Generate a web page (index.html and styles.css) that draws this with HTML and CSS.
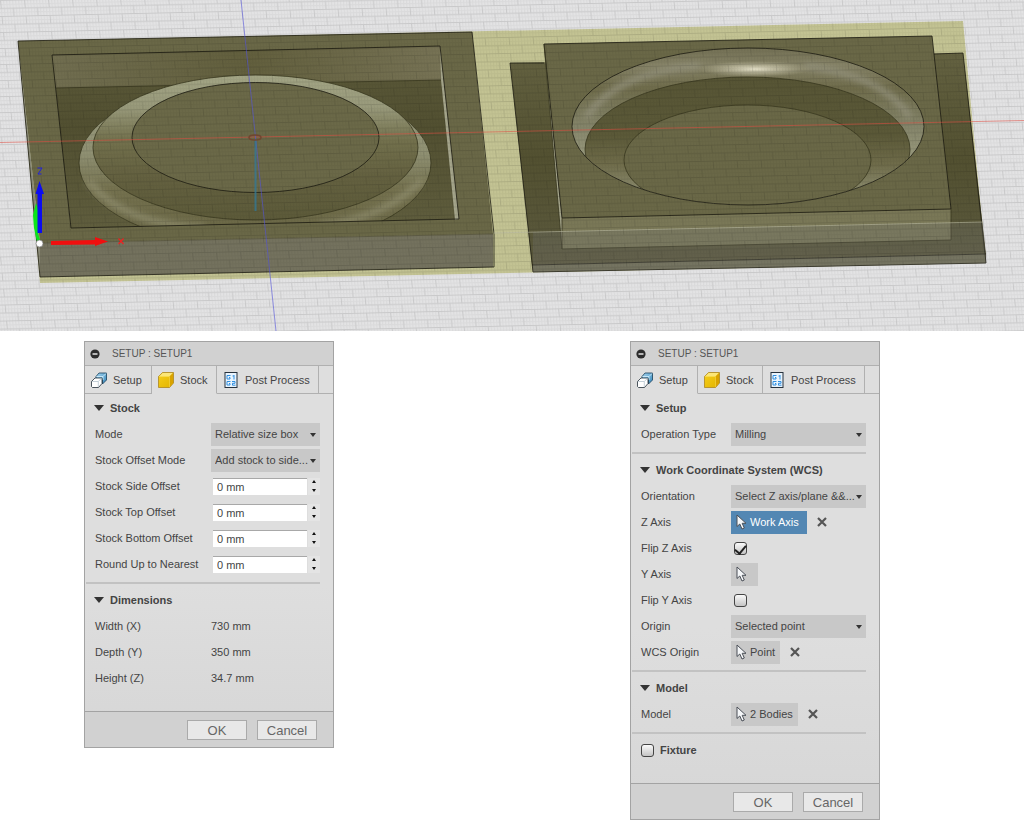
FILE: index.html
```
<!DOCTYPE html>
<html lang="en">
<head>
  <meta charset="UTF-8" />
  <meta name="viewport" content="width=device-width, initial-scale=1.0"/>
  <title>Setup : Setup1</title>
  <link rel="stylesheet" href="styles.css">
</head>
<body>
  <!-- shared icons -->
  <svg class="sprite" aria-hidden="true">
    <defs>
      <linearGradient id="blueTop" x1="0" y1="0" x2="1" y2="1">
        <stop offset="0" stop-color="#a9d8f2"/>
        <stop offset="1" stop-color="#2f83b8"/>
      </linearGradient>
      <linearGradient id="goldSide" x1="0" y1="0" x2="1" y2="1">
        <stop offset="0" stop-color="#f6cf1c"/>
        <stop offset="1" stop-color="#e2b400"/>
      </linearGradient>
    </defs>
    <symbol id="icon-setup" viewBox="0 0 16 16">
      <path d="M5 4.500L8 1H15.500V8L11.500 12V7H5Z" fill="url(#blueTop)" stroke="#173d58" stroke-width=".8"/>
      <path d="M5.500 4.500H12L15 1.500M12 4.500V8" fill="none" stroke="#d9f1fc" stroke-width=".8"/>
      <path d="M.5 9.500L4 6H11V11.500L7.500 15.500H1.500L.5 14.500Z" fill="#fff" stroke="#222e38" stroke-width=".8"/>
      <path d="M1.200 9.500H7.300V15M7.300 9.500L10.500 6.300" fill="none" stroke="#b5c4ce" stroke-width=".8"/>
    </symbol>
    <symbol id="icon-stock" viewBox="0 0 16 16">
      <path d="M.5 4.500L4.500 .5H15.500V11L11.500 15.500H.5Z" fill="url(#goldSide)" stroke="#a57d12" stroke-width=".7"/>
      <path d="M1 4.500L4.700 1H15L11.500 4.500Z" fill="#fbe678"/>
      <path d="M11.500 4.500L15 1V11L11.500 15Z" fill="#d9a300"/>
      <path d="M1 4.500H11.500V15" fill="none" stroke="#f8dc50" stroke-width=".6"/>
    </symbol>
    <symbol id="icon-post" viewBox="0 0 13 16">
      <rect x=".5" y=".5" width="12" height="15" fill="#e9f4fd" stroke="#26323e"/>
      <path d="M6 3.500H2.500V7H5.500V5.500H4.500M8 4H9.500M9.500 3V7.500M6 9.500H2.500V13H5.500V11.500H4.500M7.500 9.500H10.500V11.300H8V13.200H11" fill="none" stroke="#2f8ee0"/>
    </symbol>
    <symbol id="icon-cursor" viewBox="0 0 11 16">
      <path d="M1 1V12.500L3.800 10L6 15L8.300 14L6.200 9.300H10Z" fill="#f4f6f8" stroke="#4a4f57"/>
    </symbol>
    <symbol id="icon-clear" viewBox="0 0 10 10">
      <path d="M1 1L9 9M9 1L1 9" fill="none" stroke="#555" stroke-width="2.200"/>
    </symbol>
    <symbol id="icon-collapse" viewBox="0 0 10 10">
      <circle cx="5" cy="5" r="4.600" fill="#2c2c2c"/>
      <path d="M2.500 5H7.500" stroke="#e4e4e4" stroke-width="1.500"/>
    </symbol>
  </svg>

  <svg class="scene" viewBox="0 0 1024 331" role="img" aria-label="Stock and two machined bodies">
    <defs>
      <pattern id="gridMinor" width="3" height="4" patternUnits="userSpaceOnUse" patternTransform="matrix(1 -.022 .094 1 0 0)">
        <path d="M0 .5H3M.5 0V4" stroke="#000" stroke-opacity=".04" fill="none"/>
      </pattern>
      <pattern id="gridMajor" width="24" height="16" patternUnits="userSpaceOnUse" patternTransform="matrix(1 -.022 .094 1 0 0)">
        <path d="M0 .5H24M0 8.500H24M.5 0V8M12.500 8V16" stroke="#000" stroke-opacity=".08" fill="none"/>
      </pattern>
      <linearGradient id="floor" x1="0" y1="0" x2="0" y2="1">
        <stop offset="0" stop-color="#5c5a3a"/>
        <stop offset=".45" stop-color="#525031"/>
        <stop offset="1" stop-color="#605e3e"/>
      </linearGradient>
      <linearGradient id="backWall" x1="0" y1="0" x2="1" y2="0">
        <stop offset="0" stop-color="#716e50"/>
        <stop offset=".5" stop-color="#625f3d"/>
        <stop offset="1" stop-color="#777355"/>
      </linearGradient>
      <linearGradient id="cone" x1="0" y1="0" x2="0" y2="1">
        <stop offset="0" stop-color="#a3a585"/>
        <stop offset=".22" stop-color="#999a7b"/>
        <stop offset=".45" stop-color="#73714d"/>
        <stop offset=".7" stop-color="#646140"/>
        <stop offset="1" stop-color="#5c5a39"/>
      </linearGradient>
      <linearGradient id="skirt" x1="0" y1="0" x2="0" y2="1">
        <stop offset="0" stop-color="#a0a183"/>
        <stop offset=".45" stop-color="#8f9072"/>
        <stop offset=".65" stop-color="#75724f"/>
        <stop offset="1" stop-color="#666342"/>
      </linearGradient>
      <linearGradient id="bowlWall" x1="0" y1="0" x2="0" y2="1">
        <stop offset="0" stop-color="#716e52"/>
        <stop offset=".12" stop-color="#858266"/>
        <stop offset=".26" stop-color="#6f6c4b"/>
        <stop offset=".5" stop-color="#85856a"/>
        <stop offset=".75" stop-color="#a0a184"/>
      </linearGradient>
      <linearGradient id="bowlCone" x1="0" y1="0" x2="0" y2="1">
        <stop offset="0" stop-color="#575535"/>
        <stop offset=".4" stop-color="#5b5938"/>
        <stop offset=".6" stop-color="#6f6c4a"/>
        <stop offset=".8" stop-color="#8d8d70"/>
      </linearGradient>
      <linearGradient id="baseTop" x1="0" y1="0" x2="0" y2="1">
        <stop offset="0" stop-color="#646241"/>
        <stop offset=".5" stop-color="#535131"/>
        <stop offset="1" stop-color="#5c5a3e"/>
      </linearGradient>
      <radialGradient id="glow">
        <stop offset="0" stop-color="#e6e2ca"/>
        <stop offset=".5" stop-color="#c9c5aa" stop-opacity=".6"/>
        <stop offset="1" stop-color="#b5b194" stop-opacity="0"/>
      </radialGradient>
      <filter id="soften" x="-10%" y="-50%" width="120%" height="200%"><feGaussianBlur stdDeviation="3"/></filter>
      <clipPath id="pocketClip"><path d="M52 30H441L459 219L71 228Z"/></clipPath>
      <clipPath id="bowlClip"><ellipse cx="748" cy="126.500" rx="176" ry="78.500"/></clipPath>
    </defs>

    <rect width="1024" height="331" fill="#e3e3e4"/>
    <path d="M18 41L963 21L986 263L40 283Z" fill="#c3c393"/>

    <!-- left body -->
    <path d="M18 41L472 32L493 234L40 243Z" fill="#6a6847"/>
    <path d="M40 243L493 234V267L40 277Z" fill="#74725e"/>
    <path d="M18 41L40 243V277Z" fill="#8d8d7a"/>
    <path d="M52 55L440 46L459 219L71 228Z" fill="url(#floor)"/>
    <path d="M52 55L440 46L442 80L56 88Z" fill="url(#backWall)"/>
    <path d="M56 88L442 80" class="edge soft" fill="none"/>
    <path d="M440 46L459 219L455 220L441 80Z" fill="#a5a58b"/>
    <g clip-path="url(#pocketClip)">
      <ellipse cx="255" cy="163" rx="176" ry="84" fill="url(#skirt)" class="edge soft"/>
      <path d="M88 180Q120 224 205 228M422 180Q385 218 320 226" fill="none" stroke="#8f8d6d" stroke-width="6" filter="url(#soften)"/>
      <ellipse cx="255.500" cy="147.500" rx="162.500" ry="72.500" fill="url(#cone)" class="edge soft"/>
    </g>
    <ellipse cx="255.500" cy="137.500" rx="123.500" ry="55" fill="#6b6948" class="edge"/>
    <path d="M52 55L440 46L459 219L71 228Z" class="edge" fill="none"/>
    <path d="M472 32L18 41L40 277L494 267V234Z" class="edge" fill="none"/>
    <path d="M40 243L493 234" class="edge faint" fill="none"/>

    <!-- right body -->
    <path d="M510 63L963 53L986 254L532 265Z" fill="url(#baseTop)"/>
    <path d="M532 265L986 254V263L533 272Z" fill="#75735a"/>
    <path d="M544 44L562 218V249Z" fill="#a5a58b"/>
    <path d="M544 44L932 36L951 209L562 218Z" fill="#6a6847"/>
    <path d="M562 218L951 209V240L562 249Z" fill="#7a7857"/>
    <g clip-path="url(#bowlClip)">
      <rect x="570" y="46" width="356" height="162" fill="url(#bowlWall)"/>
      <path d="M586 118Q615 72 700 66M910 118Q885 76 805 66" fill="none" stroke="#93917a" stroke-width="6" filter="url(#soften)"/>
      <ellipse cx="755" cy="69" rx="58" ry="8" fill="url(#glow)"/>
      <ellipse cx="747.500" cy="149.500" rx="162.500" ry="72.500" fill="url(#bowlCone)" class="edge soft"/>
      <ellipse cx="747.500" cy="160" rx="123.500" ry="55" fill="#6a6847" class="edge soft"/>
    </g>
    <ellipse cx="748" cy="126.500" rx="176" ry="78.500" class="edge" fill="none"/>
    <path d="M544 44L932 36L951 209L562 218Z" class="edge" fill="none"/>
    <path d="M544 44L562 249L951 240V209M562 218V249" class="edge soft" fill="none"/>
    <path d="M544 63H510L533 272L986 263L963 53L934 54M532 265L986 254" class="edge" fill="none"/>

    <!-- front of the stock -->
    <path d="M533 232L983 222L986 263L533 272Z" fill="#777" fill-opacity=".25"/>
    <path d="M494 233L983 222" stroke="#b9b9a0" stroke-opacity=".6"/>

    <rect width="1024" height="331" fill="url(#gridMinor)"/>
    <rect width="1024" height="331" fill="url(#gridMajor)"/>

    <!-- axes -->
    <path d="M0 142.500L1024 120.500" stroke="#e04a40" stroke-opacity=".55"/>
    <path d="M241 0L276 331" stroke="#5454dc" stroke-opacity=".6"/>
    <path d="M255.500 139V211" stroke="#317a98" stroke-width="2" stroke-opacity=".75"/>
    <ellipse cx="255" cy="137.500" rx="6" ry="2.500" fill="none" stroke="#70452f" stroke-width="1.500"/>

    <!-- triad -->
    <path d="M33 215L36 203L38 210V234L41 242H37L34 228Z" fill="#0be51b"/>
    <path d="M37.500 233V194H35.500L39.500 181L44 194H42V233Z" fill="#0c0cf2"/>
    <path d="M37.500 168H42L38 174H41.500" fill="none" stroke="#2222d8"/>
    <path d="M51 241L95 240V237L108 241.500L95 246V244.500L51 245Z" fill="#f00f0f"/>
    <path d="M118.500 238.500L123.500 244M123.500 238.500L118.500 244" stroke="#e22" stroke-width="1.200"/>
    <circle cx="39.500" cy="243.500" r="3.500" fill="#fff" stroke="#777" stroke-width=".7"/>
  </svg>

  <main class="dialogs">
    <form class="dialog">
      <header class="title-bar">
        <button type="button" class="collapse" aria-label="Collapse"><svg><use href="#icon-collapse"/></svg></button>
        <span>SETUP : SETUP1</span>
      </header>
      <nav class="tabs">
        <button type="button" class="tab tab-setup"><svg><use href="#icon-setup"/></svg>Setup</button>
        <button type="button" class="tab tab-stock active"><svg><use href="#icon-stock"/></svg>Stock</button>
        <button type="button" class="tab tab-post"><svg><use href="#icon-post"/></svg>Post Process</button>
      </nav>
      <div class="content stock-content">
        <section>
          <h2>Stock</h2>
          <div class="row">
            <label for="mode">Mode</label>
            <div class="select"><select id="mode"><option>Relative size box</option></select></div>
          </div>
          <div class="row">
            <label for="offsetMode">Stock Offset Mode</label>
            <div class="select"><select id="offsetMode"><option>Add stock to side...</option></select></div>
          </div>
          <div class="row">
            <label for="sideOffset">Stock Side Offset</label>
            <div class="number"><input type="text" id="sideOffset" value="0 mm"><span class="spin"><button type="button" class="up" aria-label="Increase"></button><button type="button" class="down" aria-label="Decrease"></button></span></div>
          </div>
          <div class="row">
            <label for="topOffset">Stock Top Offset</label>
            <div class="number"><input type="text" id="topOffset" value="0 mm"><span class="spin"><button type="button" class="up" aria-label="Increase"></button><button type="button" class="down" aria-label="Decrease"></button></span></div>
          </div>
          <div class="row">
            <label for="bottomOffset">Stock Bottom Offset</label>
            <div class="number"><input type="text" id="bottomOffset" value="0 mm"><span class="spin"><button type="button" class="up" aria-label="Increase"></button><button type="button" class="down" aria-label="Decrease"></button></span></div>
          </div>
          <div class="row">
            <label for="roundUp">Round Up to Nearest</label>
            <div class="number"><input type="text" id="roundUp" value="0 mm"><span class="spin"><button type="button" class="up" aria-label="Increase"></button><button type="button" class="down" aria-label="Decrease"></button></span></div>
          </div>
        </section>
        <section>
          <h2>Dimensions</h2>
          <div class="row"><span>Width (X)</span><span>730 mm</span></div>
          <div class="row"><span>Depth (Y)</span><span>350 mm</span></div>
          <div class="row"><span>Height (Z)</span><span>34.7 mm</span></div>
        </section>
      </div>
      <footer class="actions">
        <button type="button">OK</button>
        <button type="button">Cancel</button>
      </footer>
    </form>

    <form class="dialog">
      <header class="title-bar">
        <button type="button" class="collapse" aria-label="Collapse"><svg><use href="#icon-collapse"/></svg></button>
        <span>SETUP : SETUP1</span>
      </header>
      <nav class="tabs">
        <button type="button" class="tab tab-setup active"><svg><use href="#icon-setup"/></svg>Setup</button>
        <button type="button" class="tab tab-stock"><svg><use href="#icon-stock"/></svg>Stock</button>
        <button type="button" class="tab tab-post"><svg><use href="#icon-post"/></svg>Post Process</button>
      </nav>
      <div class="content setup-content">
        <section>
          <h2>Setup</h2>
          <div class="row">
            <label for="operation">Operation Type</label>
            <div class="select"><select id="operation"><option>Milling</option></select></div>
          </div>
        </section>
        <section>
          <h2>Work Coordinate System (WCS)</h2>
          <div class="row">
            <label for="orientation">Orientation</label>
            <div class="select"><select id="orientation"><option>Select Z axis/plane &amp;&amp;...</option></select></div>
          </div>
          <div class="row">
            <label for="zAxis">Z Axis</label>
            <div class="picker">
              <button type="button" id="zAxis" class="pick selected"><svg><use href="#icon-cursor"/></svg>Work Axis</button>
              <button type="button" class="clear" aria-label="Clear Z axis"><svg><use href="#icon-clear"/></svg></button>
            </div>
          </div>
          <div class="row">
            <label for="flipZ">Flip Z Axis</label>
            <input type="checkbox" id="flipZ" checked>
          </div>
          <div class="row">
            <label for="yAxis">Y Axis</label>
            <div class="picker">
              <button type="button" id="yAxis" class="pick" aria-label="Pick Y axis"><svg><use href="#icon-cursor"/></svg></button>
            </div>
          </div>
          <div class="row">
            <label for="flipY">Flip Y Axis</label>
            <input type="checkbox" id="flipY">
          </div>
          <div class="row">
            <label for="origin">Origin</label>
            <div class="select"><select id="origin"><option>Selected point</option></select></div>
          </div>
          <div class="row">
            <label for="wcsOrigin">WCS Origin</label>
            <div class="picker">
              <button type="button" id="wcsOrigin" class="pick"><svg><use href="#icon-cursor"/></svg>Point</button>
              <button type="button" class="clear" aria-label="Clear origin"><svg><use href="#icon-clear"/></svg></button>
            </div>
          </div>
        </section>
        <section>
          <h2>Model</h2>
          <div class="row">
            <label for="model">Model</label>
            <div class="picker">
              <button type="button" id="model" class="pick"><svg><use href="#icon-cursor"/></svg>2 Bodies</button>
              <button type="button" class="clear" aria-label="Clear model"><svg><use href="#icon-clear"/></svg></button>
            </div>
          </div>
        </section>
        <section>
          <div class="fixture">
            <input type="checkbox" id="fixture">
            <label for="fixture">Fixture</label>
          </div>
        </section>
      </div>
      <footer class="actions">
        <button type="button">OK</button>
        <button type="button">Cancel</button>
      </footer>
    </form>
  </main>
</body>
</html>
```
FILE: styles.css
```
* {
  box-sizing: border-box;
}
body {
  margin: 0;
  background-color: #fff;
  font-family: "Liberation Sans", Arial, sans-serif;
  font-size: 11px;
  color: #444;
}
button,
input,
select {
  margin: 0;
  padding: 0;
  border: none;
  font: inherit;
  color: inherit;
}
button {
  background: none;
  cursor: pointer;
}
.sprite {
  position: absolute;
  width: 0;
  height: 0;
}
.scene {
  display: block;
  width: 100%;
}
.edge {
  stroke: #1d1c12;
  stroke-width: .8;
}
.edge.soft {
  stroke: #3a3820;
}
.edge.faint {
  stroke: #55533d;
}
.dialogs {
  display: flex;
  justify-content: space-between;
  align-items: flex-start;
  padding: 10px 144px 0 84px;
}
.dialog {
  width: 250px;
  border: 1px solid #a3a3a3;
  background: linear-gradient(#dedede 60%, #d6d6d6);
}
.title-bar {
  display: flex;
  align-items: center;
  gap: 12px;
  height: 24px;
  padding-left: 5px;
  border-bottom: 1px solid #b0b0b0;
  background-color: #d1d1d1;
  font-size: 10px;
  color: #555;
}
.collapse,
.collapse svg {
  display: block;
  width: 10px;
  height: 10px;
}

/* tabs */
.tabs {
  display: flex;
  height: 28px;
  border-bottom: 1px solid #b0b0b0;
}
.tab {
  display: flex;
  align-items: center;
  gap: 6px;
  height: 28px;
  padding-left: 6px;
  border-right: 1px solid #b0b0b0;
  border-bottom: 1px solid #b0b0b0;
}
.tab svg {
  width: 16px;
  height: 16px;
}
.tab.active {
  border-bottom-color: #dedede;
}
.tab-setup {
  width: 67px;
}
.tab-stock {
  width: 65px;
}
.tab-post {
  width: 102px;
}

/* content */
.content {
  padding: 1px 13px 20px 1px;
}
section + section {
  margin-top: 5px;
  padding-top: 3px;
  border-top: 2px solid #c2c2c2;
}
h2 {
  display: flex;
  align-items: center;
  gap: 6px;
  height: 26px;
  margin: 0;
  padding-left: 8px;
  font-size: 11px;
}
h2::before {
  content: "";
  border: 5px solid transparent;
  border-top: 6px solid #333;
  border-bottom: none;
}
.row {
  display: grid;
  align-items: center;
  height: 26px;
  padding-left: 9px;
}
.stock-content .row {
  grid-template-columns: 116px minmax(0, 1fr);
}
.setup-content .row {
  grid-template-columns: 90px minmax(0, 1fr);
}
.select {
  position: relative;
  height: 23px;
  background-color: #c8c8c8;
}
.select::after {
  content: "";
  position: absolute;
  top: 10px;
  right: 4px;
  border: 3px solid transparent;
  border-top: 4px solid #333;
  border-bottom: none;
  pointer-events: none;
}
select {
  appearance: none;
  width: 100%;
  height: 23px;
  padding: 0 8px 0 4px;
  background: none;
  text-overflow: ellipsis;
}
.number {
  display: flex;
  padding-left: 2px;
}
.number input {
  flex: 1;
  min-width: 0;
  height: 17px;
  padding-left: 4px;
  border-top: 1px solid #a8a8a8;
  background-color: #fff;
}
.spin {
  display: flex;
  flex-direction: column;
  width: 12px;
  margin-left: 1px;
  background-color: #e4e4e4;
}
.spin button {
  flex: 1;
  display: flex;
  justify-content: center;
  align-items: center;
}
.spin button::before {
  content: "";
  border: 2px solid transparent;
}
.spin .up::before {
  border-top: none;
  border-bottom: 3px solid #111;
}
.spin .down::before {
  border-bottom: none;
  border-top: 3px solid #111;
}
.picker {
  display: flex;
  align-items: center;
  gap: 10px;
}
.pick {
  display: flex;
  align-items: center;
  gap: 3px;
  min-width: 27px;
  height: 23px;
  padding: 0 5px;
  background-color: #c8c8c8;
}
.pick svg {
  width: 11px;
  height: 16px;
}
.pick.selected {
  padding-right: 8px;
  background-color: #5387b3;
  color: #fff;
}
.clear,
.clear svg {
  display: block;
  width: 10px;
  height: 10px;
}
input[type="checkbox"] {
  appearance: none;
  display: flex;
  justify-content: center;
  width: 13px;
  height: 13px;
  margin-left: 3px;
  border: 1px solid #444;
  border-radius: 3px;
  background: linear-gradient(#fafafa, #c4c4c4);
}
input[type="checkbox"]:checked::before {
  content: "";
  width: 5px;
  height: 9px;
  border: solid #222;
  border-width: 0 2px 2px 0;
  transform: rotate(40deg);
}
.fixture {
  display: flex;
  align-items: center;
  gap: 6px;
  height: 26px;
  padding-left: 6px;
  font-weight: bold;
}

.actions {
  display: flex;
  justify-content: flex-end;
  gap: 10px;
  padding: 8px 16px 7px;
  border-top: 1px solid #a3a3a3;
  background-color: #d1d1d1;
}
.actions button {
  width: 60px;
  height: 20px;
  border: 1px solid #aaa;
  background-color: #e8e8e8;
  font-size: 13px;
  color: #666;
}
```
